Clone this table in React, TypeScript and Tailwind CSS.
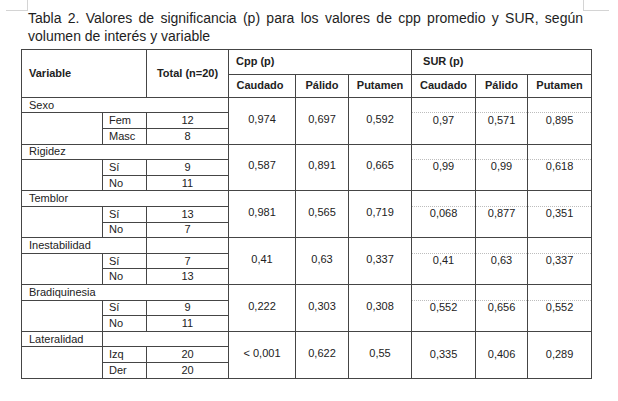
import React from "react";

type Group = {
  label: string;
  kind: "full" | "two" | "one";
  subs: [string, string][];
  cpp: string[];
  sur: string[];
  dotted: boolean;
};

const groups: Group[] = [
  { label: "Sexo", kind: "full", subs: [["Fem", "12"], ["Masc", "8"]], cpp: ["0,974", "0,697", "0,592"], sur: ["0,97", "0,571", "0,895"], dotted: true },
  { label: "Rigidez", kind: "full", subs: [["Sí", "9"], ["No", "11"]], cpp: ["0,587", "0,891", "0,665"], sur: ["0,99", "0,99", "0,618"], dotted: true },
  { label: "Temblor", kind: "full", subs: [["Sí", "13"], ["No", "7"]], cpp: ["0,981", "0,565", "0,719"], sur: ["0,068", "0,877", "0,351"], dotted: true },
  { label: "Inestabilidad", kind: "two", subs: [["Sí", "7"], ["No", "13"]], cpp: ["0,41", "0,63", "0,337"], sur: ["0,41", "0,63", "0,337"], dotted: true },
  { label: "Bradiquinesia", kind: "full", subs: [["Sí", "9"], ["No", "11"]], cpp: ["0,222", "0,303", "0,308"], sur: ["0,552", "0,656", "0,552"], dotted: true },
  { label: "Lateralidad", kind: "one", subs: [["Izq", "20"], ["Der", "20"]], cpp: ["< 0,001", "0,622", "0,55"], sur: ["0,335", "0,406", "0,289"], dotted: false },
];

const cell = "border border-[#454545] p-0";

export default function App() {
  return (
    <div
      className="relative w-[618px] h-[401px] bg-white overflow-hidden text-[#222]"
      style={{ fontFamily: '"Liberation Sans", Arial, sans-serif' }}
    >
      {/* page corner marks */}
      <div className="absolute left-[6px] top-0 w-[22px] h-[11px] border-r border-b border-[#d4d4d4]" />
      <div className="absolute left-[583px] top-0 w-[26px] h-[11px] border-l border-b border-[#d4d4d4]" />

      <div className="pl-[28px] pt-[9px]">
        <p className="w-[555px] text-[14px] leading-[18.4px] text-justify [text-align-last:left] text-[#1e1e1e]">
          Tabla 2. Valores de significancia (p) para los valores de cpp promedio y SUR, según volumen de interés y variable
        </p>
      </div>

      <table className="ml-[21px] mt-[3px] border-collapse table-fixed w-[570px] text-[11px] leading-[13px]">
        <colgroup>
          <col className="w-[81px]" />
          <col className="w-[44px]" />
          <col className="w-[82px]" />
          <col className="w-[67px]" />
          <col className="w-[53px]" />
          <col className="w-[63px]" />
          <col className="w-[64px]" />
          <col className="w-[52px]" />
          <col className="w-[64px]" />
        </colgroup>
        <thead>
          <tr className="h-[25px]">
            <th rowSpan={2} colSpan={2} className={`${cell} text-left font-bold pl-[7px]`}>Variable</th>
            <th rowSpan={2} className={`${cell} text-center font-bold`}>Total (n=20)</th>
            <th colSpan={3} className={`${cell} text-left font-bold pl-[7px]`}>Cpp (p)</th>
            <th colSpan={3} className={`${cell} text-left font-bold pl-[11px]`}>SUR (p)</th>
          </tr>
          <tr className="h-[23px]">
            <th className={`${cell} font-bold text-center pr-[4px]`}>Caudado</th>
            <th className={`${cell} font-bold text-center`}>Pálido</th>
            <th className={`${cell} font-bold text-center`}>Putamen</th>
            <th className={`${cell} font-bold text-center`}>Caudado</th>
            <th className={`${cell} font-bold text-center`}>Pálido</th>
            <th className={`${cell} font-bold text-center`}>Putamen</th>
          </tr>
        </thead>
        <tbody>
          {groups.map((g) => (
            <React.Fragment key={g.label}>
              <tr className="h-[15.6px]">
                {g.kind === "full" && (
                  <td colSpan={3} className={`${cell} pl-[7px] text-left`}>{g.label}</td>
                )}
                {g.kind === "two" && (
                  <>
                    <td colSpan={2} className={`${cell} pl-[7px] text-left`}>{g.label}</td>
                    <td className={cell}></td>
                  </>
                )}
                {g.kind === "one" && (
                  <>
                    <td className={`${cell} pl-[7px] text-left`}>{g.label}</td>
                    <td colSpan={2} className={cell}></td>
                  </>
                )}
                {g.cpp.map((v, i) => (
                  <td key={"c" + i} rowSpan={3} className={`${cell} text-center align-middle pb-[3px]`}>{v}</td>
                ))}
                {g.sur.map((v, i) => (
                  <td key={"s" + i} rowSpan={3} className={`${cell} relative text-center align-middle pb-[1px]`}>
                    {g.dotted && (
                      <span className="absolute left-0 right-0 top-[14.6px] border-t border-dotted border-[#bdbdbd]" />
                    )}
                    {v}
                  </td>
                ))}
              </tr>
              {g.subs.map(([s, n], i) => (
                <tr key={s + i} className="h-[15.6px]">
                  {i === 0 && <td rowSpan={2} className={cell}></td>}
                  <td className={`${cell} pl-[6px] text-left`}>{s}</td>
                  <td className={`${cell} text-center`}>{n}</td>
                </tr>
              ))}
            </React.Fragment>
          ))}
        </tbody>
      </table>
    </div>
  );
}
